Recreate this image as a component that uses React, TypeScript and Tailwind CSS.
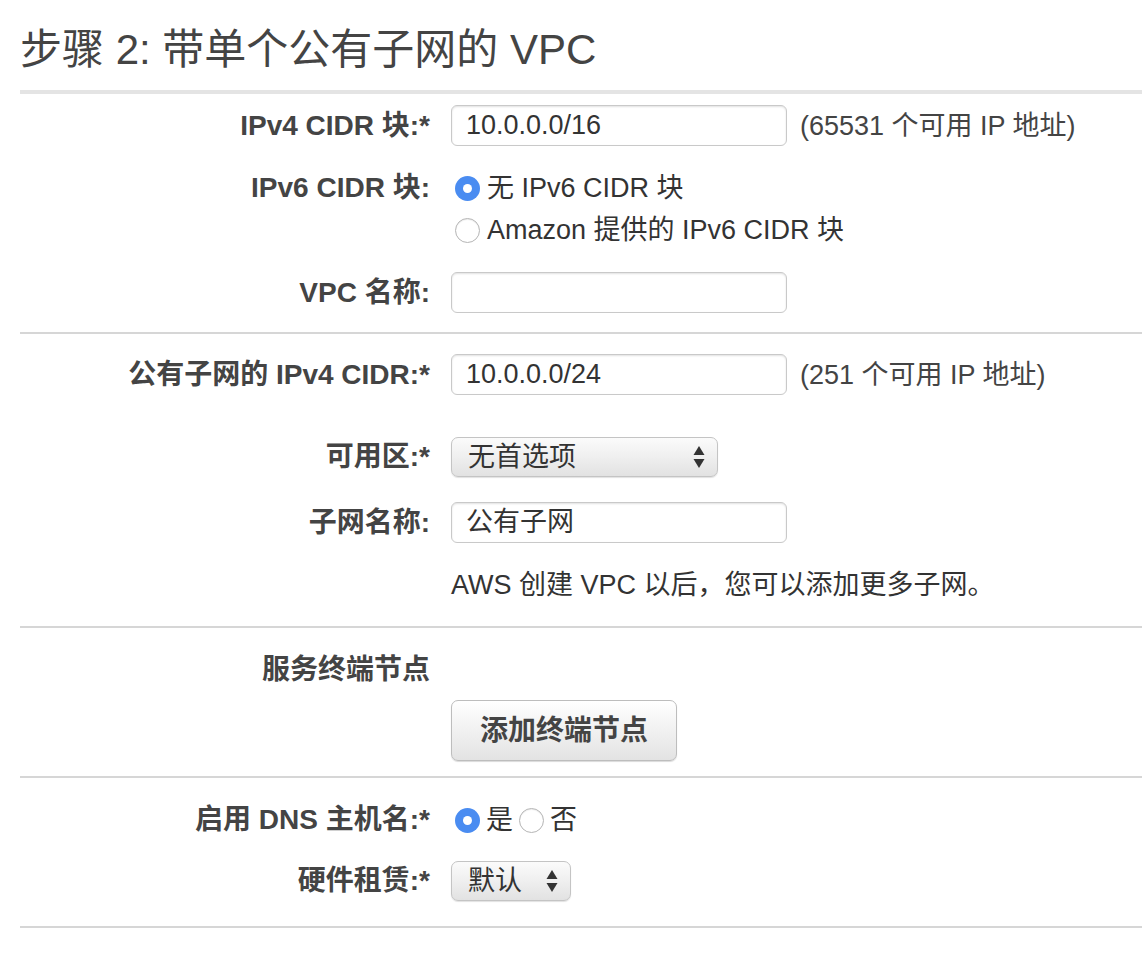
import React from "react";

const Label = ({ children }: { children: React.ReactNode }) => (
  <div className="w-[410px] shrink-0 text-right text-[28px] font-bold text-[#444] leading-[40px]">
    {children}
  </div>
);

const Input = ({ value, w = "w-[336px]" }: { value?: string; w?: string }) => (
  <div
    className={`${w} h-[41px] rounded-[6px] border border-[#c9c9c9] bg-white shadow-[inset_0_1px_2px_rgba(0,0,0,0.12)] pl-[14px] text-[27px] leading-[39px] text-[#333]`}
  >
    {value}
  </div>
);

const Arrows = () => (
  <svg width="12" height="24" viewBox="0 0 12 24" className="shrink-0">
    <path d="M6 1 L11.5 10 L0.5 10 Z" fill="#333" />
    <path d="M6 23 L11.5 14 L0.5 14 Z" fill="#333" />
  </svg>
);

const Select = ({ value, w }: { value: string; w: string }) => (
  <div
    className={`${w} h-[40px] rounded-[7px] border border-[#c4c4c4] bg-gradient-to-b from-[#fbfbfb] via-[#efefef] to-[#e2e2e2] shadow-[0_1px_1px_rgba(0,0,0,0.12)] flex items-center justify-between pl-[16px] pr-[12px] text-[27px] text-[#333]`}
  >
    <span className="leading-[38px]">{value}</span>
    <Arrows />
  </div>
);

const Radio = ({ checked }: { checked?: boolean }) =>
  checked ? (
    <div className="w-[25px] h-[25px] rounded-full bg-[#4a8cf1] flex items-center justify-center shrink-0">
      <div className="w-[9px] h-[9px] rounded-full bg-white" />
    </div>
  ) : (
    <div className="w-[25px] h-[25px] rounded-full border border-[#b5b5b5] bg-white shadow-[inset_0_1px_1px_rgba(0,0,0,0.08)] shrink-0" />
  );

const Hint = ({ children }: { children: React.ReactNode }) => (
  <span className="ml-[13px] text-[27px] text-[#444] leading-[40px]">{children}</span>
);

export default function App() {
  return (
    <div className="w-[1142px] h-[972px] bg-white pl-[20px] font-['Liberation_Sans','Noto_Sans_CJK_SC',sans-serif] text-[#444]">
      <h2 className="pt-[27px] mb-[17px] text-[42px] leading-[46px] font-normal text-[#444]">
        步骤 2: 带单个公有子网的 VPC
      </h2>
      <div className="h-[4px] bg-[#e4e4e4]" />

      {/* Section 1 */}
      <div className="pt-[11px] pb-[19px] flex flex-col gap-[21px] border-b-2 border-[#d6d6d6]">
        <div className="flex items-center gap-[21px]">
          <Label>IPv4 CIDR 块:*</Label>
          <div className="flex items-center">
            <Input value="10.0.0.0/16" />
            <Hint>(65531 个可用 IP 地址)</Hint>
          </div>
        </div>
        <div className="flex items-start gap-[21px]">
          <div className="w-[410px] shrink-0 text-right text-[28px] font-bold leading-[42px]">IPv6 CIDR 块:</div>
          <div className="flex flex-col pl-[4px] text-[27px] text-[#333]">
            <div className="h-[42px] flex items-center gap-[7px]">
              <Radio checked />
              <span>无 IPv6 CIDR 块</span>
            </div>
            <div className="h-[42px] flex items-center gap-[7px]">
              <Radio />
              <span>Amazon 提供的 IPv6 CIDR 块</span>
            </div>
          </div>
        </div>
        <div className="flex items-center gap-[21px]">
          <Label>VPC 名称:</Label>
          <Input />
        </div>
      </div>

      {/* Section 2 */}
      <div className="pt-[20px] pb-[26px] flex flex-col border-b-2 border-[#d6d6d6]">
        <div className="flex items-center gap-[21px]">
          <Label>公有子网的 IPv4 CIDR:*</Label>
          <div className="flex items-center">
            <Input value="10.0.0.0/24" />
            <Hint>(251 个可用 IP 地址)</Hint>
          </div>
        </div>
        <div className="mt-[42px] flex items-center gap-[21px]">
          <Label>可用区:*</Label>
          <Select value="无首选项" w="w-[267px]" />
        </div>
        <div className="mt-[25px] flex items-center gap-[21px]">
          <Label>子网名称:</Label>
          <Input value="公有子网" />
        </div>
        <div className="mt-[27px] pl-[431px] text-[27px] leading-[30px] text-[#333]">
          AWS 创建 VPC 以后，您可以添加更多子网。
        </div>
      </div>

      {/* Section 3 */}
      <div className="pt-[26px] pb-[15px] flex flex-col border-b-2 border-[#d6d6d6]">
        <div className="flex items-center gap-[21px]">
          <div className="w-[410px] shrink-0 text-right text-[28px] font-bold leading-[32px]">服务终端节点</div>
        </div>
        <div className="mt-[14px] pl-[431px]">
          <div className="w-[226px] h-[61px] rounded-[7px] border border-[#bdbdbd] bg-gradient-to-b from-[#ffffff] to-[#e3e3e3] shadow-[0_1px_1px_rgba(0,0,0,0.15)] flex items-center justify-center text-[28px] font-bold text-[#444]">
            添加终端节点
          </div>
        </div>
      </div>

      {/* Section 4 */}
      <div className="pt-[22px] pb-[25px] flex flex-col gap-[20px] border-b-2 border-[#d6d6d6]">
        <div className="flex items-center gap-[21px]">
          <Label>启用 DNS 主机名:*</Label>
          <div className="flex items-center pl-[4px] text-[27px] text-[#333] gap-[6px]">
            <Radio checked />
            <span>是</span>
            <Radio />
            <span>否</span>
          </div>
        </div>
        <div className="flex items-center gap-[21px]">
          <Label>硬件租赁:*</Label>
          <Select value="默认" w="w-[120px]" />
        </div>
      </div>
    </div>
  );
}
